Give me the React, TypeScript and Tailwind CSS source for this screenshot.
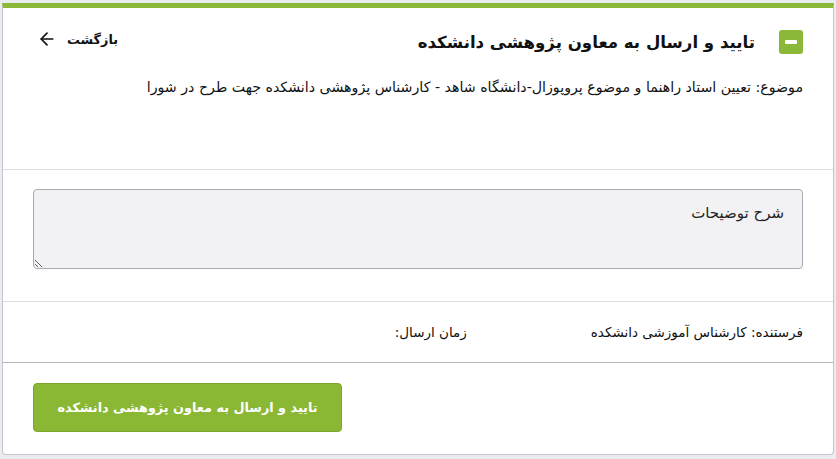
import { ArrowLeft } from 'lucide-react'

export default function App() {
  return (
    <div
      dir="rtl"
      className="min-h-screen bg-[#ebecef] pt-[3px] pb-[4px] px-[2px]"
      style={{ fontFamily: "'DejaVu Sans', 'Noto Sans', sans-serif" }}
    >
      <div className="bg-white border-x border-b border-[#c4c4cc] rounded-b-[4px] border-t-[5px] border-t-[#8cb83a] text-[#222]">
        {/* header */}
        <div className="px-[30px] pt-[21px] h-[162px] border-b border-[#dcdce0]">
          <div className="flex items-center justify-between">
            <div className="flex items-center gap-[24px]">
              <div className="w-[24px] h-[24px] rounded-[3px] bg-[#8cb83a] flex items-center justify-center">
                <div className="w-[12px] h-[4px] bg-white rounded-[1px]" />
              </div>
              <h1 className="text-[16.6px] font-bold text-[#111] mt-[2px]">تایید و ارسال به معاون پژوهشی دانشکده</h1>
            </div>
            <a className="flex items-center gap-[10px] text-[12.8px] font-bold text-[#111] ml-[4px] -mt-[6px]">
              بازگشت
              <ArrowLeft size={20} strokeWidth={2} />
            </a>
          </div>
          <p className="mt-[21px] text-[14.2px] text-[#111]">
            موضوع: تعیین استاد راهنما و موضوع پروپوزال-دانشگاه شاهد - کارشناس پژوهشی دانشکده جهت طرح در شورا
          </p>
        </div>

        {/* description */}
        <div className="px-[30px] pt-[19px] pb-[32px] border-b border-[#dcdce0]">
          <textarea
            placeholder="شرح توضیحات"
            className="block w-full h-[80px] bg-[#f2f2f4] border border-[#a9a9b2] rounded-[4px] px-[18px] py-[12px] text-[15px] placeholder:text-[#222] outline-none"
          />
        </div>

        {/* meta */}
        <div className="px-[30px] h-[61px] flex items-center gap-[124px] text-[13.5px] text-[#111] border-b border-[#b4b4bc]">
          <span>فرستنده: کارشناس آموزشی دانشکده</span>
          <span>زمان ارسال:</span>
        </div>

        {/* actions */}
        <div className="px-[30px] pt-[20px] pb-[22px] flex justify-end">
          <button className="w-[309px] h-[49px] bg-[#8ab835] border border-[#7ea62f] rounded-[4px] text-white font-bold text-[12.8px]">
            تایید و ارسال به معاون پژوهشی دانشکده
          </button>
        </div>
      </div>
    </div>
  )
}
